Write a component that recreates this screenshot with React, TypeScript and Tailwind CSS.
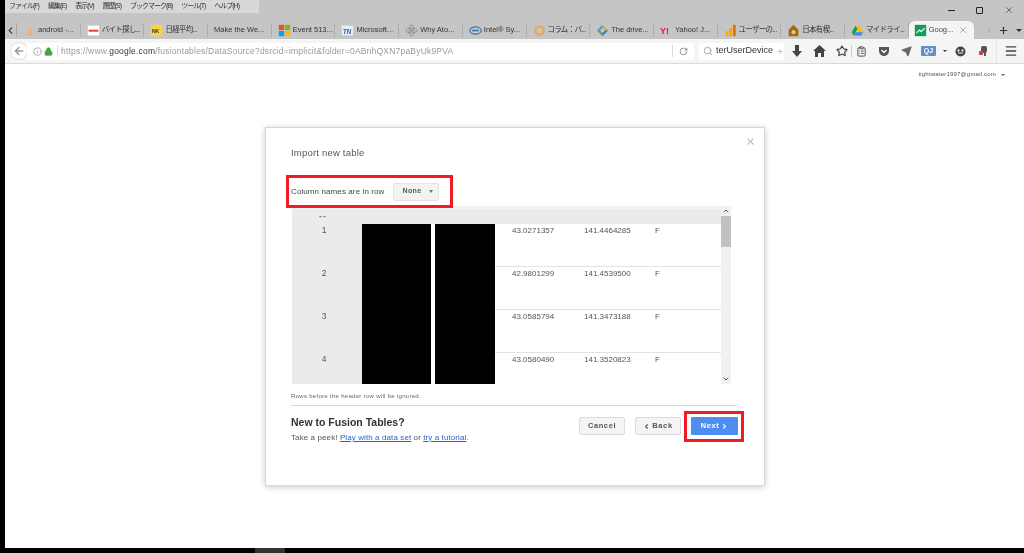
import React from "react";
import { ArrowLeft, Info, Lock, RotateCw, Search, ArrowRight, Star, ClipboardList, Send, Menu, X, ChevronLeft, ChevronRight, Plus, ChevronUp, ChevronDown } from "lucide-react";

const ic = (d: React.ReactNode) => (
  <svg width="13" height="13" viewBox="0 0 16 16" className="shrink-0">{d}</svg>
);

const tabs: { t: string; jp?: boolean; i: React.ReactNode }[] = [
  { t: "android -...", i: ic(<path d="M3 14 L6 6 L9 2 L11 6 L13 14Z" fill="#e8b48c" />) },
  { t: "バイト探し...", jp: true, i: ic(<><rect x="1" y="2" width="14" height="12" fill="#fff" /><rect x="2" y="7" width="12" height="2.5" fill="#e8432a" /></>) },
  { t: "日経平均...", jp: true, i: ic(<><rect x="1" y="1" width="14" height="14" fill="#fbd33b" /><text x="2" y="11" fontSize="7" fontWeight="700" fill="#444" fontFamily="Liberation Sans">NK</text></>) },
  { t: "Make the We...", i: null },
  { t: "Event 513...", i: ic(<><rect x="1" y="1" width="6.5" height="6.5" fill="#f25022" /><rect x="8.5" y="1" width="6.5" height="6.5" fill="#7fba00" /><rect x="1" y="8.5" width="6.5" height="6.5" fill="#00a4ef" /><rect x="8.5" y="8.5" width="6.5" height="6.5" fill="#ffb900" /></>) },
  { t: "Microsoft...", i: ic(<><rect x="1" y="2" width="14" height="12" fill="#e8eef6" /><text x="2" y="12" fontSize="8" fontStyle="italic" fontWeight="700" fill="#3a5f95" fontFamily="Liberation Sans">TN</text></>) },
  { t: "Why Ato...", i: ic(<><ellipse cx="8" cy="8" rx="7" ry="3" fill="none" stroke="#888" /><ellipse cx="8" cy="8" rx="3" ry="7" fill="none" stroke="#888" /><circle cx="8" cy="8" r="1.6" fill="#888" /></>) },
  { t: "Intel® Sy...", i: ic(<><ellipse cx="8" cy="8" rx="7" ry="4.5" fill="none" stroke="#2f79bd" strokeWidth="1.5" /><rect x="4" y="7" width="8" height="2" fill="#2f79bd" /></>) },
  { t: "コラム：バ...", jp: true, i: ic(<circle cx="8" cy="8" r="5" fill="none" stroke="#eda45e" strokeWidth="3" />) },
  { t: "The drive...", i: ic(<><path d="M8 1 L15 8 L8 8Z" fill="#e8a33a" /><path d="M1 8 L8 1 L8 8Z" fill="#4a9ad4" /><path d="M1 8 L8 15 L8 8Z" fill="#5aa85a" /><path d="M15 8 L8 15 L8 8Z" fill="#3f78c4" /><circle cx="8" cy="8" r="2.5" fill="#c6c6c6" /></>) },
  { t: "Yahoo! J...", i: ic(<text x="0" y="12" fontSize="11" fontWeight="700" fill="#e8133c" fontFamily="Liberation Sans">Y!</text>) },
  { t: "ユーザーの...", jp: true, i: ic(<><rect x="2" y="9" width="3.5" height="6" fill="#f9ab00" /><rect x="6.5" y="5" width="3.5" height="10" fill="#f9ab00" /><rect x="11" y="1" width="3.5" height="14" fill="#e37400" /></>) },
  { t: "日本有楔...", jp: true, i: ic(<><path d="M8 1 L14 7 L14 15 L2 15 L2 7Z" fill="#9b6a1e" /><circle cx="8" cy="10" r="2.5" fill="#f0c567" /></>) },
  { t: "マイドライ...", jp: true, i: ic(<><path d="M5.5 2 L10.5 2 L15 10 L12.5 14Z" fill="#fbbc04" /><path d="M5.5 2 L1 10 L3.5 14 L8 6Z" fill="#0f9d58" /><path d="M3.5 14 L12.5 14 L15 10 L6 10Z" fill="#4285f4" /></>) },
];

const rows = [
  ["1", "43.0271357", "141.4464285"],
  ["2", "42.9801299", "141.4539500"],
  ["3", "43.0585794", "141.3473188"],
  ["4", "43.0580490", "141.3520823"],
];

const btn = "h-[18px] rounded-[2px] border border-[#dcdcdc] bg-[#f4f4f4] flex items-center justify-center text-[7.5px] font-bold tracking-[0.6px] text-[#555]";

export default function App() {
  return (
    <div className="w-[1024px] h-[553px] bg-black flex flex-col overflow-hidden blur-[0.4px] text-[#444]" style={{ fontFamily: '"Liberation Sans","Noto Sans CJK JP",sans-serif' }}>
      <div className="ml-[5px] h-[548px] flex flex-col bg-white">
        <div className="h-[39px] bg-[#c5c5c5] flex flex-col shrink-0">
          <div className="h-[18px] flex items-start justify-between">
            <div className="h-[13px] w-[254px] bg-[#d8d8d8] flex items-center pl-[4px] gap-[9px] text-[7px] tracking-[-1px] text-[#333] whitespace-nowrap">
              <span>ファイル(F)</span><span>編集(E)</span><span>表示(V)</span><span>履歴(S)</span><span>ブックマーク(B)</span><span>ツール(T)</span><span>ヘルプ(H)</span>
            </div>
            <div className="flex items-center gap-[21px] pr-[10px] pt-[5px] text-[#222]">
              <span className="w-[7px] h-px bg-[#222]" />
              <span className="w-[7px] h-[7px] border border-[#222] rounded-[1px]" />
              <X size={10} strokeWidth={1.3} />
            </div>
          </div>
          <div className="mt-[3px] h-[18px] flex items-center">
            <div className="w-[11px] h-[18px] flex items-center justify-center shrink-0 text-[#444]">
              <ChevronLeft size={11} strokeWidth={2.5} />
            </div>
            <span className="w-px h-[14px] bg-[#a9a9a9]" />
            {tabs.map((t) => (
              <div key={t.t} className={`w-[63.7px] shrink-0 h-[14px] flex items-center gap-[2px] border-r border-[#aeaeae] text-[7.5px] text-[#333] whitespace-nowrap overflow-hidden pl-[6px] ${t.jp ? "tracking-[-0.7px]" : ""}`}>
                {t.i}
                <span>{t.t}</span>
              </div>
            ))}
            <div className="w-[65px] h-[18px] shrink-0 bg-[#f5f5f5] rounded-t-[6px] flex items-center pl-[5px] gap-[2px] text-[7.5px] text-[#444]">
              <svg width="13" height="13" viewBox="0 0 16 16" className="shrink-0"><rect x="1" y="1" width="14" height="14" fill="#0f9d58" /><path d="M3 11 L7 7.5 L9 9.5 L13 5" stroke="#fff" strokeWidth="1.3" fill="none" /></svg>
              <span>Goog...</span>
              <X size={10} strokeWidth={1.3} className="shrink-0 ml-[3px] text-[#666]" />
            </div>
            <ChevronRight size={10} className="ml-[10px] text-[#a0a0a0]" />
            <Plus size={11} strokeWidth={2.5} className="ml-[4px] text-[#333]" />
            <span className="ml-[7px] w-0 h-0 border-x-[3px] border-x-transparent border-t-[3px] border-t-[#333]" />
          </div>
        </div>

        <div className="h-[25px] shrink-0 bg-[#f5f5f5] border-b border-[#dadada] flex items-center text-[#444]">
          <div className="w-[18px] h-[18px] ml-[5px] rounded-full bg-white border border-[#e0e0e0] flex items-center justify-center text-[#999]">
            <ArrowLeft size={12} strokeWidth={3} />
          </div>
          <div className="ml-[-1px] w-[667px] h-[17px] bg-white flex items-center rounded-r-[2px]">
            <Info size={9} className="ml-[6px] text-[#999]" />
            <Lock size={9} className="ml-[2px] text-[#3da53d]" fill="#3da53d" />
            <span className="ml-[4px] w-px h-[12px] bg-[#ddd]" />
            <span className="ml-[3px] text-[8.5px] tracking-[0.2px] text-[#999] whitespace-nowrap">https://www.<span className="text-[#333]">google.com</span>/fusiontables/DataSource?dsrcid=implicit&amp;folder=0ABnhQXN7paByUk9PVA</span>
            <span className="ml-auto w-px h-[12px] bg-[#ddd]" />
            <RotateCw size={9} className="ml-[6px] mr-[6px] text-[#777]" />
          </div>
          <div className="ml-[5px] w-[85px] h-[17px] bg-white rounded-[2px] flex items-center pl-[4px] pr-[3px] gap-[3px]">
            <Search size={10} className="shrink-0 text-[#999]" />
            <span className="text-[9px] text-[#333] whitespace-nowrap">terUserDevice</span>
            <ArrowRight size={7} className="ml-auto shrink-0 text-[#999]" />
          </div>
          <div className="flex items-center ml-[7px] text-[#444]">
            <svg width="10" height="12" viewBox="0 0 10 12" className="ml-px"><path d="M3 0 H7 V6 H10 L5 12 L0 6 H3Z" fill="#444" /></svg>
            <svg width="13" height="12" viewBox="0 0 13 12" className="ml-[11px]"><path d="M6.5 0 L13 6 H11 V12 H8 V8 H5 V12 H2 V6 H0Z" fill="#444" /></svg>
            <Star size={12} strokeWidth={2.4} className="ml-[10px]" />
            <span className="ml-[3px] w-px h-[12px] bg-[#ccc]" />
            <ClipboardList size={11} strokeWidth={2} className="ml-[4px]" />
            <svg width="12" height="11" viewBox="0 0 12 11" className="ml-[11px]"><path d="M1 1 H11 V5 C11 8 8 10 6 10 C4 10 1 8 1 5Z" fill="#555" /><path d="M3.5 4 L6 6.5 L8.5 4" fill="none" stroke="#fff" strokeWidth="1.4" /></svg>
            <Send size={11} fill="#666" className="ml-[11px] text-[#666]" />
            <span className="ml-[9px] h-[10px] w-[15px] bg-[#5e8fcf] rounded-[1px] text-white text-[7px] font-bold leading-[10px] text-center">QJ</span>
            <span className="ml-[7px] w-0 h-0 border-x-[2px] border-x-transparent border-t-[2px] border-t-[#333]" />
            <svg width="11" height="11" viewBox="0 0 11 11" className="ml-[8px]"><circle cx="5.5" cy="5.5" r="5" fill="#444" /><rect x="2.5" y="3.5" width="2" height="2" fill="#f5f5f5" /><rect x="6.5" y="3.5" width="2" height="2" fill="#f5f5f5" /><path d="M3 7 H8" stroke="#f5f5f5" /></svg>
            <svg width="12" height="12" viewBox="0 0 12 12" className="ml-[11px]"><rect x="4" y="1" width="6" height="7" rx="2" fill="#555" /><rect x="2" y="6" width="4" height="4" fill="#c54a4a" /><rect x="7" y="8" width="2" height="3" fill="#555" /></svg>
            <span className="ml-[7px] w-px h-[24px] bg-[#e6e6e6]" />
            <Menu size={14} strokeWidth={2.2} className="ml-[7px]" />
          </div>
        </div>

        <div className="flex-1 relative flex flex-col">
          <div className="h-[22px] flex items-start justify-end pr-[19px] pt-[6px] gap-[5px] text-[6px] tracking-[0.2px] text-[#555]">
            <span>tightwater1997@gmail.com</span>
            <span className="mt-[4px] w-0 h-0 border-x-[2px] border-x-transparent border-t-[2px] border-t-[#666]" />
          </div>
          <div className="ml-[260px] mt-[41px] w-[500px] h-[359px] bg-white border border-[#d8d8d8] shadow-[0_1px_6px_rgba(0,0,0,0.22)] relative flex flex-col pl-[25px] pr-[33px] shrink-0">
            <X size={11} strokeWidth={2.2} className="absolute right-[8px] top-[8px] text-[#aaa]" />
            <div className="mt-[19px] text-[9.5px] tracking-[0.2px] leading-[12px] text-[#555]">Import new table</div>
            <div className="mt-[24px] h-[17px] flex items-center">
              <span className="text-[8px] tracking-[0.1px] text-[#444]">Column names are in row</span>
              <div className="ml-[9px] w-[46px] h-[18px] bg-[#f3f3f3] border border-[#e4e4e4] rounded-[2px] flex items-center justify-between pl-[8px] pr-[5px] text-[7px] font-bold tracking-[0.4px] text-[#555]">
                None
                <span className="w-0 h-0 border-x-[2.5px] border-x-transparent border-t-[3px] border-t-[#777]" />
              </div>
            </div>
            <div className="mt-[6px] ml-px h-[178px] w-[439px] flex overflow-hidden shrink-0">
              <div className="w-[429px] flex flex-col overflow-hidden">
                <div className="h-[18px] shrink-0 bg-[#ebebeb] border-t-[3px] border-[#f3f3f3] flex">
                  <span className="w-[62px] text-center text-[9px] tracking-[1px] leading-[14px] font-bold text-[#777]">--</span>
                </div>
                {rows.map((r, idx) => (
                  <div key={r[0]} className="h-[43px] shrink-0 flex">
                    <div className="w-[70px] bg-[#ebebeb] pr-[6px] text-center text-[8.5px] leading-[13px] text-[#555]">{r[0]}</div>
                    <div className="w-[69px] bg-black" />
                    <div className="w-[4px]" />
                    <div className="w-[60px] bg-black" />
                    <div className={`flex-1 flex pl-[17px] text-[8px] leading-[13px] text-[#555] ${idx < 3 ? "border-b border-[#e2e2e2]" : ""}`}>
                      <div className="w-[72px]">{r[1]}</div>
                      <div className="w-[71px]">{r[2]}</div>
                      <div>F</div>
                    </div>
                  </div>
                ))}
              </div>
              <div className="w-[10px] bg-[#f1f1f1] flex flex-col items-center text-[#555]">
                <ChevronUp size={8} strokeWidth={3} className="mt-px shrink-0" />
                <div className="w-[10px] h-[31px] mt-px shrink-0 bg-[#c1c1c1]" />
                <ChevronDown size={8} strokeWidth={3} className="mt-auto mb-px shrink-0" />
              </div>
            </div>
            <div className="mt-[8px] text-[6px] tracking-[0.3px] leading-[8px] text-[#666]">Rows before the header row will be ignored.</div>
            <div className="mt-[5px] h-[1px] w-[446px] bg-[#d8d8d8]" />
            <div className="flex items-start mt-[10px]">
              <div>
                <div className="text-[10.5px] font-bold tracking-[0px] leading-[13px] text-[#333]">New to Fusion Tables?</div>
                <div className="mt-[3px] text-[8px] tracking-[0.1px] leading-[11px] text-[#555]">Take a peek! <span className="text-[#2a62d0] underline">Play with a data set</span> or <span className="text-[#2a62d0] underline">try a tutorial</span>.</div>
              </div>
              <div className="ml-auto mr-[-7px] flex gap-[10px] pt-px">
                <div className={`${btn} w-[46px]`}>Cancel</div>
                <div className={`${btn} w-[46px] gap-[2px]`}><ChevronLeft size={7} strokeWidth={4} />Back</div>
                <div className="h-[18px] w-[47px] rounded-[1px] bg-[#4d8ef0] flex items-center justify-center gap-[2px] text-[7.5px] font-bold tracking-[0.6px] text-white">Next<ChevronRight size={7} strokeWidth={4} /></div>
              </div>
            </div>
            <div className="absolute left-[20px] top-[47px] w-[167px] h-[33px] border-[3px] border-[#ee1c25]" />
            <div className="absolute left-[418px] top-[283px] w-[60px] h-[31px] border-[3px] border-[#ee1c25]" />
          </div>
        </div>
      </div>
      <div className="h-[5px] relative"><div className="absolute left-[255px] top-0 w-[30px] h-[5px] bg-[#333]" /></div>
    </div>
  );
}
